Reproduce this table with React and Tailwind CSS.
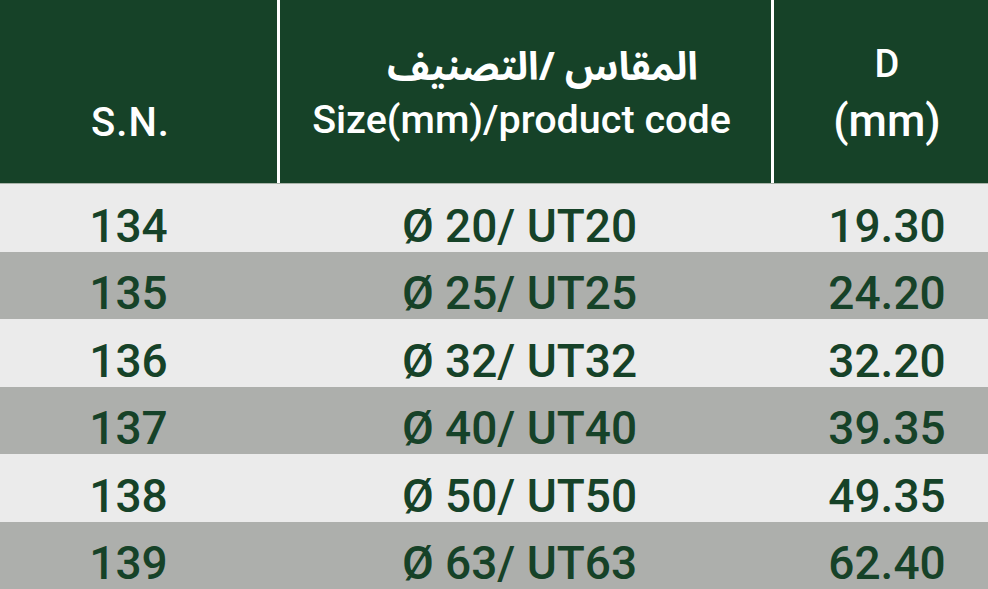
import React from "react";

const rows = [
  ["134", "Ø 20/ UT20", "19.30"],
  ["135", "Ø 25/ UT25", "24.20"],
  ["136", "Ø 32/ UT32", "32.20"],
  ["137", "Ø 40/ UT40", "39.35"],
  ["138", "Ø 50/ UT50", "49.35"],
  ["139", "Ø 63/ UT63", "62.40"],
];

export default function App() {
  return (
    <div
      className="w-[988px] h-[589px] bg-white flex flex-col overflow-hidden"
      style={{ fontFamily: "Roboto, 'Liberation Sans', sans-serif" }}
    >
      <div className="h-[183px] flex gap-[3px] text-white font-medium shrink-0">
        <div className="w-[277px] bg-[#164228] flex flex-col justify-end items-center pb-[37px] pr-[16px]">
          <span className="text-[40px] leading-[46px] tracking-[1px]">S.N.</span>
        </div>
        <div className="w-[491px] bg-[#164228] flex flex-col justify-end items-center pb-[40px]">
          <span
            dir="rtl"
            className="font-bold text-[39px] leading-[40px] mb-[9px] pl-[34px]"
            style={{ fontFamily: "'Noto Sans Arabic', 'DejaVu Sans', sans-serif" }}
          >
            المقاس /التصنيف
          </span>
          <span className="text-[39.5px] leading-[46px] pr-[8px]">Size(mm)/product code</span>
        </div>
        <div className="flex-1 bg-[#164228] flex flex-col justify-end items-center pb-[39px] pl-[12px]">
          <span className="text-[38px] leading-[46px] mb-[11px]">D</span>
          <span className="text-[44px] leading-[46px]">(mm)</span>
        </div>
      </div>
      <div className="h-px bg-[#a9b3a9] shrink-0" />
      <div className="flex-1 flex flex-col text-[#164228] font-medium text-[46px] leading-[50px]">
        {rows.map((r, i) => (
          <div
            key={r[0]}
            className={`flex-1 flex gap-[3px] ${i % 2 === 0 ? "bg-[#ebebeb]" : "bg-[#adafac]"}`}
          >
            <div className="w-[277px] flex items-center justify-center pt-[16px] pr-[20px]">
              <span>{r[0]}</span>
            </div>
            <div className="w-[491px] flex items-center justify-center pt-[16px] pr-[12px]">
              <span>{r[1]}</span>
            </div>
            <div className="flex-1 flex items-center justify-center pt-[16px] pl-[12px]">
              <span>{r[2]}</span>
            </div>
          </div>
        ))}
      </div>
    </div>
  );
}
